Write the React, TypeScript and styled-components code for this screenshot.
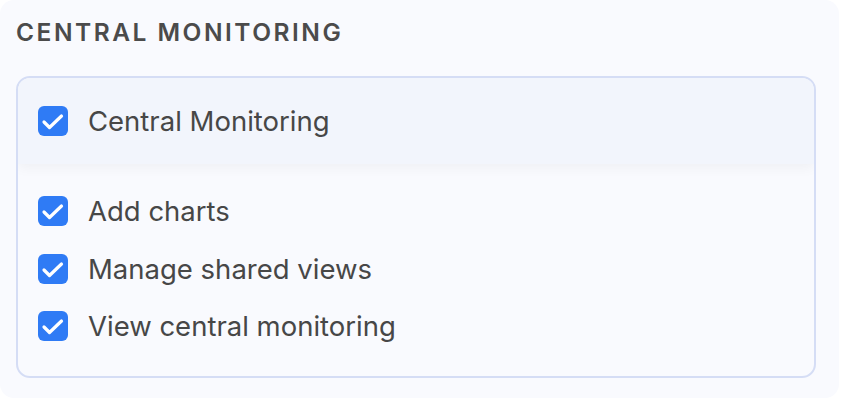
import React, { FC } from 'react';
import styled, { createGlobalStyle } from 'styled-components';

const GlobalStyle = createGlobalStyle`
  html, body {
    margin: 0;
    padding: 0;
    background: #ffffff;
  }
  body {
    font-family: Inter, "Noto Sans", sans-serif;
  }
`;

const Panel = styled.section`
  box-sizing: border-box;
  width: 839px;
  height: 398px;
  background: #f9fafe;
  border-radius: 14px;
  padding: 16px 23px 0 16px;
`;

const Title = styled.h2`
  margin: 0;
  font-size: 24.5px;
  font-weight: 600;
  letter-spacing: 2.5px;
  line-height: 32px;
  color: #4b4b4b;
  text-transform: uppercase;
`;

const Group = styled.div`
  margin-top: 28px;
  box-sizing: border-box;
  height: 302px;
  border: 2px solid #d5ddf5;
  border-radius: 14px;
  overflow: hidden;
  background: #f9fafe;
`;

const GroupHeader = styled.div`
  display: flex;
  align-items: center;
  height: 86px;
  padding-left: 20px;
  background: #f2f5fc;
  box-shadow: 0 4px 12px rgba(0, 0, 0, 0.045);
  position: relative;
`;

const List = styled.ul`
  list-style: none;
  margin: 0;
  padding: 32px 0 0 20px;
  display: flex;
  flex-direction: column;
  gap: 27.5px;
`;

const Row = styled.li`
  display: flex;
  align-items: center;
  height: 30px;
`;

const Label = styled.span`
  margin-left: 20px;
  font-size: 27.5px;
  color: #474747;
  font-weight: 400;
`;

const Box = styled.span`
  display: inline-flex;
  width: 30px;
  height: 30px;
  border-radius: 6px;
  background: #2f7bf5;
  flex-shrink: 0;

  svg {
    display: block;
  }
`;

const Check: FC = () => (
  <Box>
    <svg width="30" height="30" viewBox="0 0 30 30" fill="none">
      <path d="M6 16l5.5 5.5L23.5 10" stroke="#fff" strokeWidth="3.2" strokeLinecap="round" strokeLinejoin="round" />
    </svg>
  </Box>
);

const permissions = ['Add charts', 'Manage shared views', 'View central monitoring'];

const App: FC = () => (
  <>
    <GlobalStyle />
    <Panel>
      <Title>Central Monitoring</Title>
      <Group>
        <GroupHeader>
          <Check />
          <Label>Central Monitoring</Label>
        </GroupHeader>
        <List>
          {permissions.map((p) => (
            <Row key={p}>
              <Check />
              <Label>{p}</Label>
            </Row>
          ))}
        </List>
      </Group>
    </Panel>
  </>
);

export default App;
